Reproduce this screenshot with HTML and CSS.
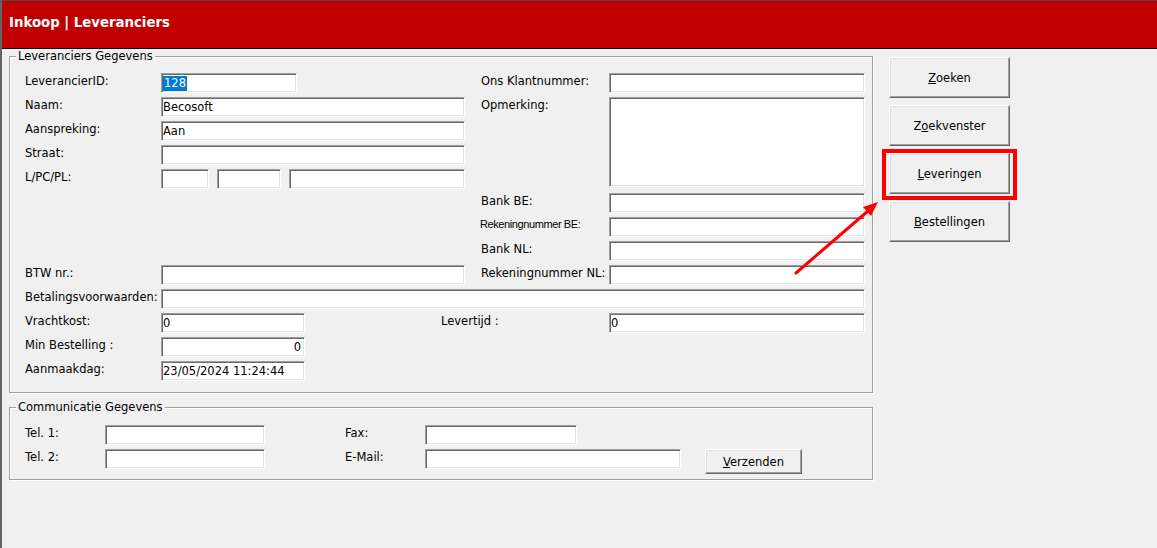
FILE: index.html
```html
<!DOCTYPE html>
<html>
<head>
  <title>Inkoop | Leveranciers</title>
  <meta charset="utf-8">
  <link rel="stylesheet" href="styles.css">
</head>
<body>
  <div class="window">
    <div class="titlebar">Inkoop | Leveranciers</div>

    <div class="main">
      <div class="forms">
        <div class="group">
          <span class="legend">Leveranciers Gegevens</span>
          <div class="grid-main">
            <label class="lbl a-lid">LeverancierID:</label>
            <div class="field a-id w136"><span class="sel">128</span></div>
            <label class="lbl a-lons">Ons Klantnummer:</label>
            <input class="a-ons" type="text">

            <label class="lbl a-lnm">Naam:</label>
            <input class="a-nm w304" type="text" value="Becosoft">
            <label class="lbl a-lopm">Opmerking:</label>
            <textarea class="a-opm"></textarea>

            <label class="lbl a-lasp">Aanspreking:</label>
            <input class="a-asp w304" type="text" value="Aan">

            <label class="lbl a-lstr">Straat:</label>
            <input class="a-str w304" type="text">

            <label class="lbl a-lpc">L/PC/PL:</label>
            <div class="a-pc pc">
              <input class="w48" type="text">
              <input class="w64" type="text">
              <input class="w176" type="text">
            </div>

            <label class="lbl a-lbbe">Bank BE:</label>
            <input class="a-bbe" type="text">

            <label class="lbl small a-lrbe">Rekeningnummer BE:</label>
            <input class="a-rbe" type="text">

            <label class="lbl a-lbnl">Bank NL:</label>
            <input class="a-bnl" type="text">

            <label class="lbl a-lbtw">BTW nr.:</label>
            <input class="a-btw w304" type="text">
            <label class="lbl a-lrnl">Rekeningnummer NL:</label>
            <input class="a-rnl" type="text">

            <label class="lbl a-lbet">Betalingsvoorwaarden:</label>
            <input class="a-bet" type="text">

            <label class="lbl a-lvr">Vrachtkost:</label>
            <input class="a-vr w144" type="text" value="0">
            <label class="lbl a-llt">Levertijd :</label>
            <input class="a-lt" type="text" value="0">

            <label class="lbl a-lmin">Min Bestelling :</label>
            <input class="a-min w144 right" type="text" value="0">

            <label class="lbl a-lamd">Aanmaakdag:</label>
            <input class="a-amd w144" type="text" value="23/05/2024 11:24:44">
          </div>
        </div>

        <div class="group group-comm">
          <span class="legend">Communicatie Gegevens</span>
          <div class="grid-comm">
            <label class="lbl c-lt1">Tel. 1:</label>
            <input class="c-t1 w160" type="text">
            <label class="lbl c-lfax">Fax:</label>
            <input class="c-fax w152" type="text">

            <label class="lbl c-lt2">Tel. 2:</label>
            <input class="c-t2 w160" type="text">
            <label class="lbl c-lmail">E-Mail:</label>
            <input class="c-mail w256" type="text">
            <button class="btn btn-small c-send"><u>V</u>erzenden</button>
          </div>
        </div>
      </div>

      <div class="actions">
        <button class="btn"><u>Z</u>oeken</button>
        <button class="btn">Z<u>o</u>ekvenster</button>
        <div class="marked">
          <button class="btn"><u>L</u>everingen</button>
          <span class="mark"></span>
        </div>
        <button class="btn"><u>B</u>estellingen</button>
      </div>
    </div>
  </div>

  <svg class="annot" width="1157" height="548" viewBox="0 0 1157 548">
    <line x1="796" y1="273" x2="868" y2="211" stroke="#f00" stroke-width="3" stroke-linecap="round"/>
    <polygon points="878,202 871,216 863,207" fill="#f00"/>
  </svg>
</body>
</html>
```

FILE: styles.css
```css
* {
  box-sizing: border-box;
}

body {
  margin: 0;
  position: relative;
  width: 1157px;
  height: 548px;
  overflow: hidden;
  background: #f0f0f0;
  font-family: "DejaVu Sans", Verdana, sans-serif;
  font-size: 11.5px;
  color: #000;
}

.window {
  height: 548px;
  border-left: 2px solid #646464;
}

.titlebar {
  height: 49px;
  padding-left: 7px;
  background: #c00000;
  border-top: 1px solid #4a4a4a;
  border-bottom: 1px solid #000;
  color: #fff;
  font-weight: bold;
  font-size: 13.3px;
  line-height: 43px;
}

.main {
  display: flex;
  padding-left: 7px;
}

.forms {
  width: 864px;
}

/* etched group boxes */
.group {
  margin-top: 7px;
  border: 1px solid #a0a0a0;
  box-shadow: inset 1px 1px #fff, 1px 1px #fff;
}

.group-comm {
  margin-top: 14px;
}

.legend {
  display: block;
  width: max-content;
  margin: -8px 0 0 6px;
  padding: 0 2px;
  background: #f0f0f0;
  line-height: 14px;
}

.lbl {
  line-height: 16px;
  white-space: nowrap;
}

.lbl.small {
  font-family: "Liberation Sans", Arial, sans-serif;
  font-size: 11px;
  letter-spacing: -0.4px;
  margin-left: -1px;
  line-height: 14px;
}

input, textarea, .field {
  display: block;
  width: 100%;
  height: 20px;
  margin: 0;
  padding: 0 1px;
  font: inherit;
  color: #000;
  background: #fff;
  border: 1px solid;
  border-color: #a0a0a0 #fff #fff #a0a0a0;
  box-shadow: inset 1px 1px #696969, inset -1px -1px #e3e3e3;
  outline: none;
  border-radius: 0;
}

.field {
  padding: 2px 1px 0;
}

.sel {
  display: inline-block;
  background: #0078d7;
  color: #fff;
  line-height: 15px;
  padding: 0 1px;
}

textarea {
  resize: none;
  align-self: start;
  height: 90px;
}

.right {
  text-align: right;
  padding-right: 3px;
}

.w48 { width: 48px; }
.w64 { width: 64px; }
.w136 { width: 136px; }
.w144 { width: 144px; }
.w152 { width: 152px; }
.w160 { width: 160px; }
.w176 { width: 176px; }
.w256 { width: 256px; }
.w304 { width: 304px; }

.pc {
  display: flex;
  gap: 8px;
}

.grid-main {
  display: grid;
  grid-template-columns: 136px 280px 40px 128px 256px;
  grid-template-rows: repeat(13, 20px);
  row-gap: 4px;
  margin-top: 10px;
  padding: 0 0 11px 15px;
  grid-template-areas:
    "lid  id   .    lons ons"
    "lnm  nm   nm   lopm opm"
    "lasp asp  asp  .    opm"
    "lstr str  str  .    opm"
    "lpc  pc   pc   .    opm"
    ".    .    .    lbbe bbe"
    ".    .    .    lrbe rbe"
    ".    .    .    lbnl bnl"
    "lbtw btw  btw  lrnl rnl"
    "lbet bet  bet  bet  bet"
    "lvr  vr   llt  llt  lt"
    "lmin min  .    .    ."
    "lamd amd  .    .    .";
}

.a-lid { grid-area: lid; }
.a-id { grid-area: id; }
.a-lons { grid-area: lons; }
.a-ons { grid-area: ons; }
.a-lnm { grid-area: lnm; }
.a-nm { grid-area: nm; }
.a-lopm { grid-area: lopm; }
.a-opm { grid-area: opm; }
.a-lasp { grid-area: lasp; }
.a-asp { grid-area: asp; }
.a-lstr { grid-area: lstr; }
.a-str { grid-area: str; }
.a-lpc { grid-area: lpc; }
.a-pc { grid-area: pc; }
.a-lbbe { grid-area: lbbe; }
.a-bbe { grid-area: bbe; }
.a-lrbe { grid-area: lrbe; }
.a-rbe { grid-area: rbe; }
.a-lbnl { grid-area: lbnl; }
.a-bnl { grid-area: bnl; }
.a-lbtw { grid-area: lbtw; }
.a-btw { grid-area: btw; }
.a-lrnl { grid-area: lrnl; }
.a-rnl { grid-area: rnl; }
.a-lbet { grid-area: lbet; }
.a-bet { grid-area: bet; }
.a-lvr { grid-area: lvr; }
.a-vr { grid-area: vr; }
.a-llt { grid-area: llt; }
.a-lt { grid-area: lt; }
.a-lmin { grid-area: lmin; }
.a-min { grid-area: min; }
.a-lamd { grid-area: lamd; }
.a-amd { grid-area: amd; }

.grid-comm {
  display: grid;
  grid-template-columns: 80px 240px 80px 280px 97px;
  grid-template-rows: 20px 25px;
  row-gap: 4px;
  margin-top: 11px;
  padding: 0 0 5px 15px;
  grid-template-areas:
    "lt1 t1 lfax fax  ."
    "lt2 t2 lmail mail send";
}

.c-lt1 { grid-area: lt1; }
.c-t1 { grid-area: t1; }
.c-lfax { grid-area: lfax; }
.c-fax { grid-area: fax; }
.c-lt2 { grid-area: lt2; }
.c-t2 { grid-area: t2; }
.c-lmail { grid-area: lmail; }
.c-mail { grid-area: mail; }
.c-send { grid-area: send; }

/* raised buttons */
.btn {
  display: block;
  width: 121px;
  height: 41px;
  padding: 0;
  font: inherit;
  color: #000;
  background: #f0f0f0;
  border: 1px solid;
  border-color: #fff #696969 #696969 #fff;
  box-shadow: inset -1px -1px #a0a0a0, inset 1px 1px #e3e3e3;
  border-radius: 0;
}

.btn-small {
  width: 97px;
  height: 25px;
}

.actions {
  display: flex;
  flex-direction: column;
  gap: 7px;
  margin: 8px 0 0 16px;
}

.marked {
  position: relative;
}

.mark {
  position: absolute;
  top: -4px;
  left: -7px;
  right: -7px;
  bottom: -6px;
  border: 4px solid #f00;
}

.annot {
  position: absolute;
  top: 0;
  left: 0;
  pointer-events: none;
}
```
